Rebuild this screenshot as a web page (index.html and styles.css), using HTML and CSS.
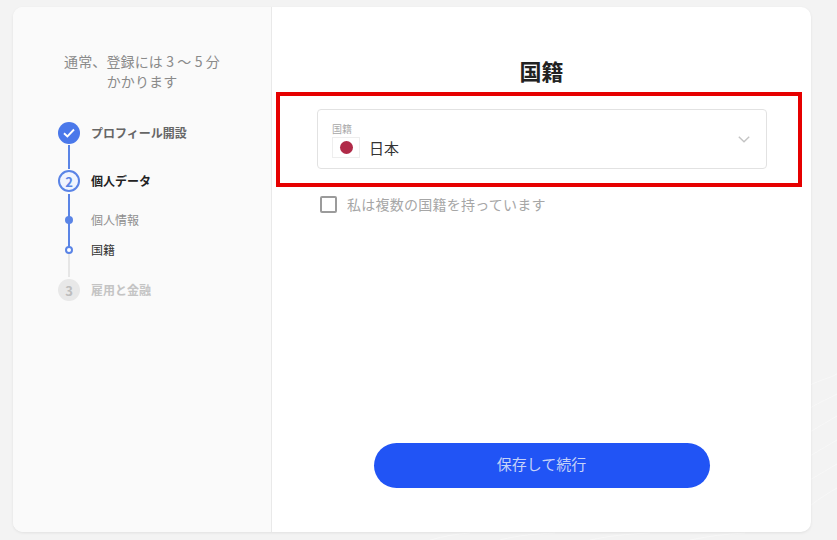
FILE: index.html
```html
<!DOCTYPE html>
<html lang="ja">

<head>
    <meta charset="UTF-8">
    <meta name="viewport" content="width=device-width, initial-scale=1.0">
    <title>国籍</title>
    <link rel="stylesheet" href="styles.css">
</head>

<body>
    <svg class="backdrop" width="837" height="540" viewBox="0 0 837 540">
        <g fill="none" stroke="#f8f8f8" stroke-width="1">
            <path d="M810 385C820 380 830 378 837 374"/>
            <path d="M810 408C820 402 830 398 837 394"/>
            <path d="M810 432C820 426 830 420 837 416"/>
            <path d="M810 456C820 450 830 444 837 440"/>
            <path d="M810 480C820 474 830 468 837 464"/>
            <path d="M810 506C820 498 830 492 837 488"/>
            <path d="M430 540C445 536 455 534 470 533"/>
            <path d="M500 540C520 535 535 534 555 533"/>
            <path d="M590 540C610 536 625 534 650 533"/>
            <path d="M690 540C710 536 725 534 745 533"/>
        </g>
    </svg>
    <div class="card">
        <aside class="sidebar">
            <p class="intro">通常、登録には 3 〜 5 分<br>かかります</p>
            <div class="steps">
                <div class="step done">
                    <span class="marker">
                        <svg width="12" height="10" viewBox="0 0 12 10"><path d="M1 5.2 4.4 8.5 11 1.5" fill="none" stroke="#fff" stroke-width="1.9"/></svg>
                    </span>
                    <span class="label">プロフィール開設</span>
                </div>
                <div class="line line-long"></div>
                <div class="step current">
                    <span class="marker">2</span>
                    <span class="label">個人データ</span>
                </div>
                <div class="line line-short"></div>
                <div class="substep passed">
                    <span class="track"><i class="dot"></i></span>
                    <span class="label">個人情報</span>
                </div>
                <div class="substep active">
                    <span class="track"><i class="dot"></i></span>
                    <span class="label">国籍</span>
                </div>
                <div class="line line-grey"></div>
                <div class="step todo">
                    <span class="marker">3</span>
                    <span class="label">雇用と金融</span>
                </div>
            </div>
        </aside>
        <main class="content">
            <h1 class="title">国籍</h1>
            <div class="highlight">
                <div class="select">
                    <div class="select-text">
                        <span class="select-label">国籍</span>
                        <span class="select-value">
                            <span class="flag"></span>
                            日本
                        </span>
                    </div>
                    <svg class="chevron" width="12" height="7" viewBox="0 0 12 7"><path d="M.8.8 6 5.8 11.2.8" fill="none" stroke="#c4c4c4" stroke-width="1.4"/></svg>
                </div>
            </div>
            <label class="check">
                <span class="box"></span>
                私は複数の国籍を持っています
            </label>
            <button class="submit">保存して続行</button>
        </main>
    </div>
</body>

</html>
```

FILE: styles.css
```css
* {
    box-sizing: border-box;
}

html,
body {
    height: 100%;
}

body {
    position: relative;
    margin: 0;
    padding: 7px 26px 8px 13px;
    background-color: #f3f3f3;
    font-family: "Noto Sans CJK JP", "Noto Sans", sans-serif;
    overflow: hidden;
}

.backdrop {
    position: absolute;
    top: 0;
    left: 0;
}

.card {
    position: relative;
    display: flex;
    height: 525px;
    border-radius: 10px;
    background-color: #fff;
    box-shadow: 0 1px 3px 0 rgba(0, 0, 0, .08);
    overflow: hidden;
}

.sidebar {
    flex: 0 0 259px;
    padding-top: 44px;
    border-right: 1px solid #e9e9e9;
    background-color: #fafafa;
}

.intro {
    margin: 0 0 31px;
    color: #8a8a8a;
    font-size: 14px;
    letter-spacing: .12px;
    line-height: 20px;
    text-align: center;
}

.steps {
    padding-left: 45px;
}

.step,
.substep {
    display: flex;
    align-items: center;
    font-size: 12px;
}

.step .label {
    margin: -2px 0 0 11px;
    font-weight: 700;
}

.marker {
    display: flex;
    align-items: center;
    justify-content: center;
    width: 22px;
    height: 22px;
    border-radius: 50%;
    font-size: 13px;
    font-weight: 700;
}

.step.done .marker {
    background-color: #4a78ea;
}

.step.done .label {
    color: #666;
}

.step.current .marker {
    border: 2px solid #5a84e6;
    background-color: #f0f4fe;
    color: #5a84e6;
}

.step.current .label {
    color: #222;
}

.step.todo .marker {
    background-color: #e8e8e8;
    color: #bdbdbd;
}

.step.todo .label {
    color: #c4c4c4;
}

.line {
    width: 2px;
    margin-left: 10px;
    background-color: #5a84e6;
}

.line-long {
    height: 24px;
    margin-top: 1px;
    margin-bottom: 1px;
}

.line-short {
    height: 11px;
    margin-top: 2px;
}

.line-grey {
    height: 12px;
    margin-bottom: 2px;
    background-color: #e6e6e6;
}

.substep {
    height: 30px;
}

.substep .label {
    margin: -2px 0 0 11px;
    font-size: 12px;
}

.substep.passed .label {
    color: #8f8f8f;
}

.substep.active .label {
    color: #333;
}

.track {
    display: flex;
    align-items: center;
    justify-content: center;
    align-self: stretch;
    width: 22px;
    background: linear-gradient(#5a84e6, #5a84e6) center / 2px 100% no-repeat;
}

.substep.active .track {
    background: linear-gradient(#5a84e6 50%, #e6e6e6 50%) center / 2px 100% no-repeat;
}

.dot {
    display: block;
    width: 8px;
    height: 8px;
    border-radius: 50%;
    background-color: #5a84e6;
}

.substep.active .dot {
    border: 2px solid #5a84e6;
    background-color: #fff;
}

.content {
    display: flex;
    flex: 1;
    flex-direction: column;
    align-items: center;
    padding: 47px 0 44px;
}

.title {
    margin: 0 0 6px;
    color: #222;
    font-size: 22px;
    font-weight: 700;
    line-height: 32px;
}

.highlight {
    align-self: stretch;
    margin: 0 9px 0 4px;
    padding: 13px 31px 14px 37px;
    border: 4px solid #e60000;
}

.select {
    display: flex;
    align-items: center;
    justify-content: space-between;
    height: 60px;
    padding: 0 16px 0 14px;
    border: 1px solid #e2e2e2;
    border-radius: 4px;
}

.select-text {
    display: flex;
    flex-direction: column;
    margin-top: 1px;
}

.select-label {
    margin-bottom: 1px;
    color: #a8a8a8;
    font-size: 10px;
    line-height: 14px;
}

.select-value {
    display: flex;
    align-items: center;
    gap: 9px;
    color: #333;
    font-size: 15px;
    line-height: 21px;
}

.chevron {
    margin-top: 1px;
}

.flag {
    display: flex;
    align-items: center;
    justify-content: center;
    width: 28px;
    height: 21px;
    border: 1px solid #eee;
    background-color: #fff;
}

.flag::after {
    content: '';
    width: 13px;
    height: 13px;
    border-radius: 50%;
    background-color: #b02a48;
}

.check {
    display: flex;
    align-items: center;
    align-self: flex-start;
    gap: 10px;
    margin: 7px 0 0 48px;
    color: #a6a6a6;
    font-size: 14px;
    letter-spacing: .25px;
    line-height: 20px;
}

.box {
    width: 17px;
    height: 17px;
    border: 2px solid #9b9b9b;
    border-radius: 2px;
}

.submit {
    width: 336px;
    height: 45px;
    margin-top: auto;
    padding-bottom: 5px;
    border: none;
    border-radius: 23px;
    background-color: #2154f5;
    color: #c5d2f8;
    font-family: inherit;
    font-size: 15px;
}
```
